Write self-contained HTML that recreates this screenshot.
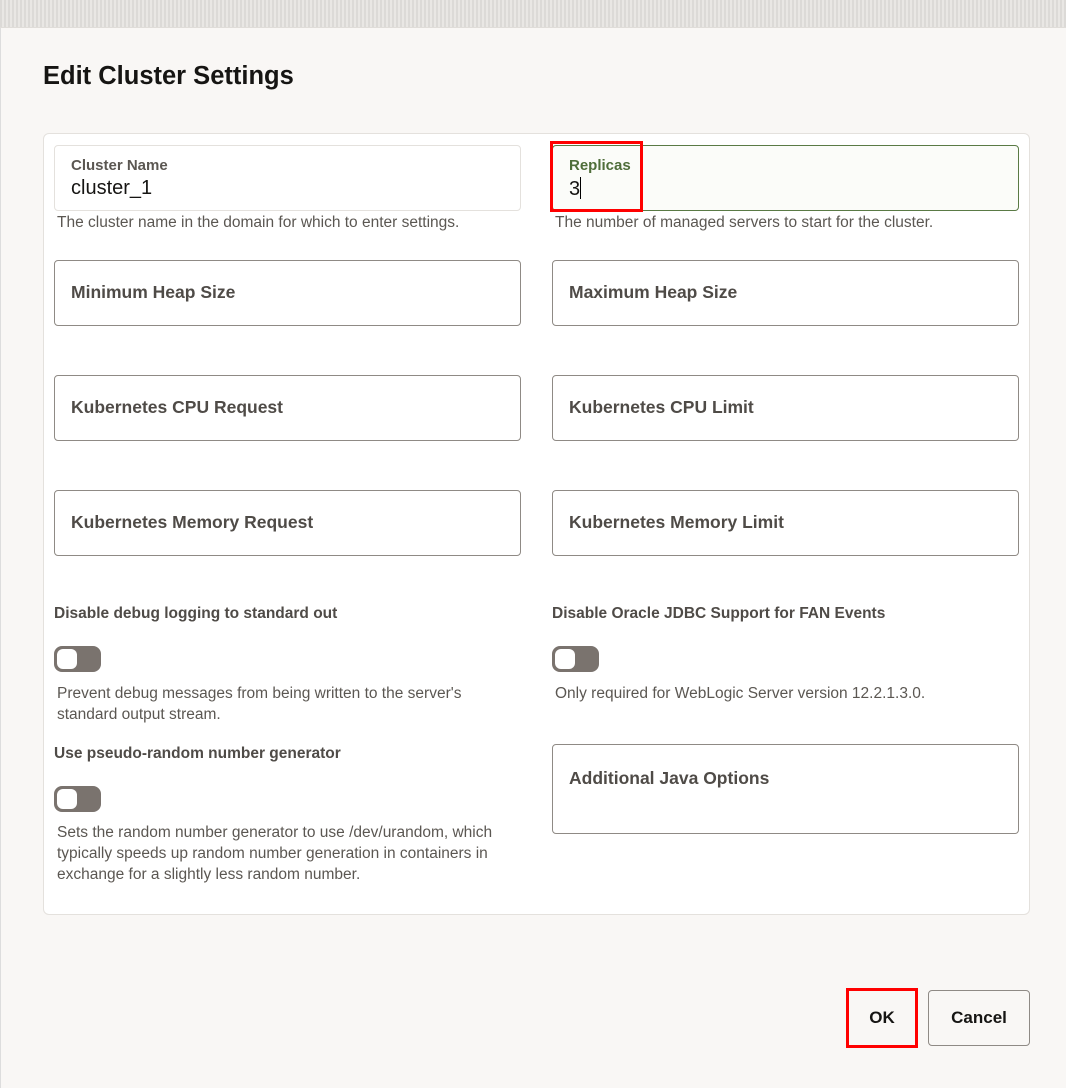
<!DOCTYPE html>
<html><head><style>
*{box-sizing:border-box;margin:0;padding:0}
body{width:1066px;height:1088px;background:#f9f7f5;font-family:"Liberation Sans",sans-serif;position:relative;overflow:hidden}
.top{position:absolute;left:0;top:0;width:1066px;height:28px;background:repeating-linear-gradient(90deg,#dcdad7 0 2px,#e9e7e4 2px 4px);border-bottom:1px solid #e0ddd9}
.dlg{position:absolute;left:0;top:28px;width:1066px;height:1060px;background:#f9f7f5;border-left:1px solid #ddd}
h1{position:absolute;left:43px;top:62px;font-size:25.5px;font-weight:bold;color:#161513}
.panel{position:absolute;left:43px;top:133px;width:987px;height:782px;background:#fff;border:1px solid #e4e1dd;border-radius:6px}
.f{position:absolute;width:467px;height:66px;border:1px solid #8f8a85;border-radius:4px;background:#fff}
.f .ph{position:absolute;left:16px;top:21px;font-size:17.5px;font-weight:bold;color:#4f4b47}
.f .lb{position:absolute;left:16px;top:11px;font-size:15px;font-weight:bold;color:#5b5752}
.f .v{position:absolute;left:16px;top:31px;font-size:20px;color:#161513}
.help{position:absolute;font-size:15.5px;color:#5b5752;line-height:21px}
.tl{position:absolute;font-size:15.5px;font-weight:bold;color:#4f4b47}
.tg{position:absolute;width:47px;height:26px;border-radius:8px;background:#7a736e}
.tg:after{content:"";position:absolute;left:3px;top:3px;width:20px;height:20px;border-radius:6px;background:#fff}
.btn{position:absolute;font-size:17px;font-weight:bold;color:#161513;text-align:center;background:#f9f7f5}
</style></head><body>
<div class="top"></div>
<div class="dlg"></div>
<h1>Edit Cluster Settings</h1>
<div class="panel"></div>

<div class="f" style="left:54px;top:145px;border-color:#e4e1dd"><div class="lb">Cluster Name</div><div class="v">cluster_1</div></div>
<div class="f" style="left:552px;top:145px;border-color:#5a7a45;background:#fbfcf9"><div class="lb" style="color:#4f6e3a">Replicas</div><div class="v">3<span style="display:inline-block;width:1px;height:22px;background:#000;vertical-align:-4px"></span></div></div>
<div style="position:absolute;left:550px;top:141px;width:93px;height:71px;border:3px solid #f00"></div>
<div class="help" style="left:57px;top:212px">The cluster name in the domain for which to enter settings.</div>
<div class="help" style="left:555px;top:212px">The number of managed servers to start for the cluster.</div>

<div class="f" style="left:54px;top:260px"><div class="ph">Minimum Heap Size</div></div>
<div class="f" style="left:552px;top:260px"><div class="ph">Maximum Heap Size</div></div>
<div class="f" style="left:54px;top:375px"><div class="ph">Kubernetes CPU Request</div></div>
<div class="f" style="left:552px;top:375px"><div class="ph">Kubernetes CPU Limit</div></div>
<div class="f" style="left:54px;top:490px"><div class="ph">Kubernetes Memory Request</div></div>
<div class="f" style="left:552px;top:490px"><div class="ph">Kubernetes Memory Limit</div></div>

<div class="tl" style="left:54px;top:605px">Disable debug logging to standard out</div>
<div class="tg" style="left:54px;top:646px"></div>
<div class="help" style="left:57px;top:683px">Prevent debug messages from being written to the server's<br>standard output stream.</div>
<div class="tl" style="left:552px;top:605px">Disable Oracle JDBC Support for FAN Events</div>
<div class="tg" style="left:552px;top:646px"></div>
<div class="help" style="left:555px;top:683px">Only required for WebLogic Server version 12.2.1.3.0.</div>

<div class="tl" style="left:54px;top:745px">Use pseudo-random number generator</div>
<div class="tg" style="left:54px;top:786px"></div>
<div class="help" style="left:57px;top:822px">Sets the random number generator to use /dev/urandom, which<br>typically speeds up random number generation in containers in<br>exchange for a slightly less random number.</div>

<div class="f" style="left:552px;top:744px;height:90px"><div class="ph" style="top:23px">Additional Java Options</div></div>

<div class="btn" style="left:846px;top:988px;width:72px;height:60px;border:3px solid #f00;line-height:54px">OK</div>
<div class="btn" style="left:928px;top:990px;width:102px;height:56px;border:1px solid #8f8a85;border-radius:4px;line-height:54px">Cancel</div>
</body></html>
